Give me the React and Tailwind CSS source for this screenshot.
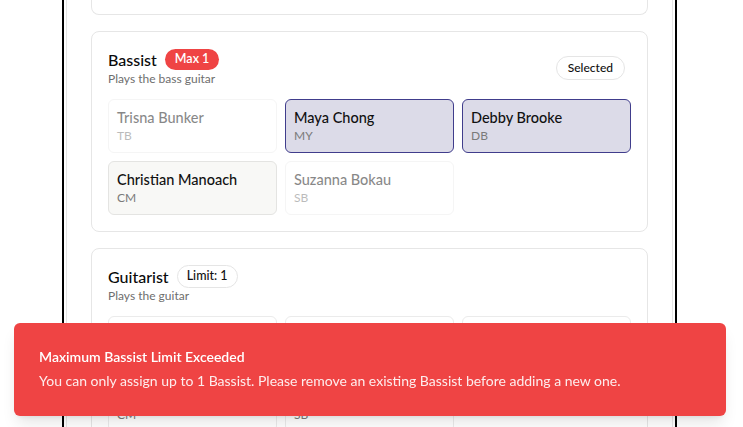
import React from "react";

const bassists = [
  { name: "Trisna Bunker", initials: "TB", state: "disabled" },
  { name: "Maya Chong", initials: "MY", state: "selected" },
  { name: "Debby Brooke", initials: "DB", state: "selected" },
  { name: "Christian Manoach", initials: "CM", state: "hover" },
  { name: "Suzanna Bokau", initials: "SB", state: "disabled" },
];

const guitarists = [
  { name: "Trisna Bunker", initials: "TB", state: "idle" },
  { name: "Maya Chong", initials: "MY", state: "idle" },
  { name: "Debby Brooke", initials: "DB", state: "idle" },
  { name: "Christian Manoach", initials: "CM", state: "idle" },
  { name: "Suzanna Bokau", initials: "SB", state: "idle" },
];

function MemberCard({ m }) {
  const base = "rounded-md border p-2 flex flex-col";
  let cls = "bg-white border-[#ebebeb]";
  if (m.state === "selected") cls = "bg-[#dcdbe8] border-[#403d8c]";
  if (m.state === "hover") cls = "bg-[#f8f8f6] border-[#e4e4e2]";
  if (m.state === "disabled") cls = "bg-white border-[#ececec] opacity-50";
  return (
    <div className={base + " " + cls}>
      <span className="text-[14.5px] leading-5 font-medium text-[#111]">{m.name}</span>
      <span className="text-[12px] leading-4 text-[#7a7a7a]">{m.initials}</span>
    </div>
  );
}

function RoleCard({ title, desc, badge, right, members }) {
  return (
    <div className="rounded-lg border border-[#e6e6e6] bg-white px-4 pt-4 pb-4">
      <div className="flex items-center justify-between pr-[6px]">
        <div>
          <div className="flex items-center gap-2 h-[22px] pt-px">
            <h2 className="text-[16px] font-medium text-[#0a0a0a]">{title}</h2>
            {badge}
          </div>
          <p className="mt-px text-[12px] leading-4 text-[#6e6e6e]">{desc}</p>
        </div>
        {right}
      </div>
      <div className="mt-3 grid grid-cols-3 gap-2">
        {members.map((m) => (
          <MemberCard key={m.initials} m={m} />
        ))}
      </div>
    </div>
  );
}

export default function App() {
  return (
    <div
      className="h-[427px] overflow-hidden bg-white"
      style={{ fontFamily: '"Segoe UI", Lato, "Noto Sans", sans-serif' }}
    >
      <div className="ml-[62px] w-[615px] h-full border-x-2 border-black px-[2px]">
        <div className="h-full border-x border-[#e5e5e5] px-6 flex flex-col gap-4">
          <div className="h-[15px] shrink-0 rounded-b-lg border border-t-0 border-[#e6e6e6]" />
          <RoleCard
            title="Bassist"
            desc="Plays the bass guitar"
            badge={
              <span className="rounded-full bg-[#ef4444] px-2.5 py-[1px] text-[12.5px] font-semibold text-white">
                Max 1
              </span>
            }
            right={
              <span className="rounded-full border border-[#e5e5e5] px-[11px] py-[2px] text-[12px] font-medium text-[#111]">
                Selected
              </span>
            }
            members={bassists}
          />
          <RoleCard
            title="Guitarist"
            desc="Plays the guitar"
            badge={
              <span className="rounded-full border border-[#e5e5e5] px-[9px] py-[1px] text-[12.5px] font-medium text-[#111]">
                Limit: 1
              </span>
            }
            members={guitarists}
          />
        </div>
      </div>

      <div className="fixed left-[14px] top-[323px] w-[712px] rounded-md bg-[#ef4444] px-[25px] pt-6 pb-[25px] text-white shadow-lg">
        <p className="text-[14px] leading-5 font-semibold">Maximum Bassist Limit Exceeded</p>
        <p className="mt-1 text-[14px] leading-5 opacity-90">
          You can only assign up to 1 Bassist. Please remove an existing Bassist before adding a new one.
        </p>
      </div>
    </div>
  );
}
